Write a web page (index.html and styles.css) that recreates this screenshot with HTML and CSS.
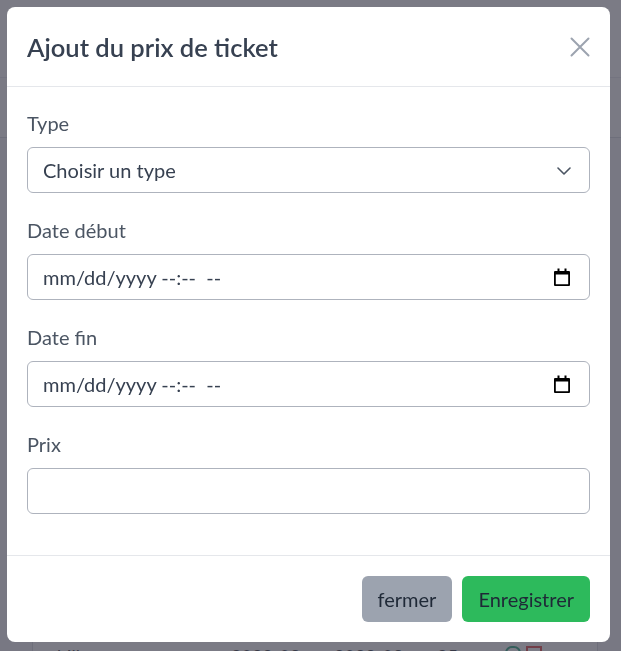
FILE: index.html
```html
<!DOCTYPE html>
<html lang="fr">
<head>
<meta charset="utf-8">
<title>Ajout du prix de ticket</title>
<link rel="stylesheet" href="styles.css">
</head>
<body>
<div class="page">
  <div class="page-header"></div>
  <div class="page-bar"></div>
  <div class="page-card">
    <div class="page-row">
      <span class="cell c1">billet</span>
      <span class="cell c2">2023-09</span>
      <span class="cell c3">2023-09</span>
      <span class="cell c4">25</span>
      <span class="cell-icons"><span class="ico-green"></span><span class="ico-red"></span></span>
    </div>
  </div>
</div>
<div class="backdrop"></div>
<div class="modal" role="dialog" aria-labelledby="modal-title">
  <div class="modal-header">
    <h2 class="modal-title" id="modal-title">Ajout du prix de ticket</h2>
    <button class="close" type="button" aria-label="Fermer">
      <svg width="20" height="20" viewBox="0 0 20 20" fill="none" stroke="currentColor" stroke-width="2" stroke-linecap="round"><path d="M1.5 1.5 L18.5 18.5 M18.5 1.5 L1.5 18.5"/></svg>
    </button>
  </div>
  <form class="modal-body">
    <div class="group">
      <label class="label" for="type">Type</label>
      <div class="field">
        <select id="type" class="control select">
          <option>Choisir un type</option>
        </select>
        <svg class="chevron" width="14" height="8" viewBox="0 0 14 8" fill="none" stroke="currentColor" stroke-width="1.6" stroke-linecap="round" stroke-linejoin="round"><path d="M1 1 L7 7 L13 1"/></svg>
      </div>
    </div>
    <div class="group">
      <label class="label" for="debut">Date début</label>
      <div class="field">
        <input id="debut" class="control date" type="text" placeholder="mm/dd/yyyy --:--  --">
        <svg class="cal" width="16" height="18" viewBox="0 0 16 18" fill="#000"><path d="M3.5 0.5h2v2.5h5V0.5h2v2.5H15a1 1 0 0 1 1 1V17a1 1 0 0 1-1 1H1a1 1 0 0 1-1-1V4a1 1 0 0 1 1-1h2.5z M1.8 6.5V16.2h12.4V6.5z"/></svg>
      </div>
    </div>
    <div class="group">
      <label class="label" for="fin">Date fin</label>
      <div class="field">
        <input id="fin" class="control date" type="text" placeholder="mm/dd/yyyy --:--  --">
        <svg class="cal" width="16" height="18" viewBox="0 0 16 18" fill="#000"><path d="M3.5 0.5h2v2.5h5V0.5h2v2.5H15a1 1 0 0 1 1 1V17a1 1 0 0 1-1 1H1a1 1 0 0 1-1-1V4a1 1 0 0 1 1-1h2.5z M1.8 6.5V16.2h12.4V6.5z"/></svg>
      </div>
    </div>
    <div class="group">
      <label class="label" for="prix">Prix</label>
      <input id="prix" class="control" type="text">
    </div>
  </form>
  <div class="modal-footer">
    <button class="btn btn-gray" type="button">fermer</button>
    <button class="btn btn-green" type="button">Enregistrer</button>
  </div>
</div>
</body>
</html>
```
FILE: styles.css
```css
html, body {
  margin: 0;
  padding: 0;
  height: 100%;
}
body {
  font-family: Lato, "Open Sans", sans-serif;
  background: #f3f4f6;
  overflow: hidden;
}
.page {
  height: 100%;
}
.page-header {
  height: 77px;
  border-bottom: 1px solid #e5e7eb;
  background: #ffffff;
}
.page-bar {
  height: 59px;
  border-bottom: 1px solid #d1d5db;
  background: #f9fafb;
}
.page-card {
  margin: 0 23px 0 32px;
  height: 520px;
  background: #ffffff;
  border-left: 1px solid #d1d5db;
  border-right: 1px solid #d1d5db;
  display: flex;
  flex-direction: column;
  justify-content: flex-end;
}
.page-row {
  display: flex;
  align-items: flex-start;
  height: 12px;
  padding-left: 24px;
  font-size: 18px;
  line-height: 20px;
  color: #111827;
}
.cell { display: inline-block; }
.c1 { width: 174px; }
.c2 { width: 103px; }
.c3 { width: 103px; }
.c4 { width: 68px; }
.cell-icons { display: flex; gap: 5px; }
.ico-green { width: 12px; height: 14px; border: 2px solid #059669; border-radius: 7px 7px 0 0; }
.ico-red { width: 12px; height: 14px; border: 2px solid #dc2626; }
.backdrop {
  position: fixed;
  inset: 0;
  background: rgba(72, 72, 86, 0.72);
}
.modal {
  position: fixed;
  top: 7px;
  left: 7px;
  width: 603px;
  height: 635px;
  background: #ffffff;
  border-radius: 8px;
  display: flex;
  flex-direction: column;
  overflow: hidden;
}
.modal-header {
  height: 79px;
  border-bottom: 1px solid #e5e7eb;
  display: flex;
  align-items: center;
  justify-content: space-between;
  padding: 0 20px;
  flex: none;
}
.modal-title {
  margin: 0;
  font-size: 25.5px;
  font-weight: 600;
  color: #374151;
}
.close {
  border: 0;
  background: transparent;
  color: #9ca3af;
  padding: 0;
  width: 20px;
  height: 20px;
  display: flex;
}
.modal-body {
  padding: 23px 20px 17px;
  flex: 1;
}
.group {
  margin-bottom: 24px;
}
.group:last-child {
  margin-bottom: 0;
}
.label {
  display: block;
  font-size: 20px;
  line-height: 27px;
  color: #4b5563;
  margin-bottom: 10px;
}
.field {
  position: relative;
}
.control {
  display: block;
  box-sizing: border-box;
  width: 100%;
  height: 46px;
  border: 1px solid #aeb3bd;
  border-radius: 6px;
  padding: 0 15px;
  font-family: Lato, "Open Sans", sans-serif;
  font-size: 20px;
  color: #374151;
  background: #ffffff;
  outline: none;
}
.control::placeholder {
  color: #374151;
  opacity: 1;
}
.select {
  appearance: none;
  -webkit-appearance: none;
}
.chevron {
  position: absolute;
  right: 19px;
  top: 20px;
  color: #4b5563;
  pointer-events: none;
}
.cal {
  position: absolute;
  right: 20px;
  top: 14px;
  pointer-events: none;
}
.modal-footer {
  flex: none;
  border-top: 1px solid #e5e7eb;
  padding: 20px;
  display: flex;
  justify-content: flex-end;
  gap: 10px;
}
.btn {
  height: 46px;
  border: 0;
  border-radius: 6px;
  padding: 0 16px;
  font-family: Lato, "Open Sans", sans-serif;
  font-size: 20px;
  color: #1f2937;
}
.btn-gray {
  background: #9ca3af;
}
.btn-green {
  background: #2dba5c;
}
```
